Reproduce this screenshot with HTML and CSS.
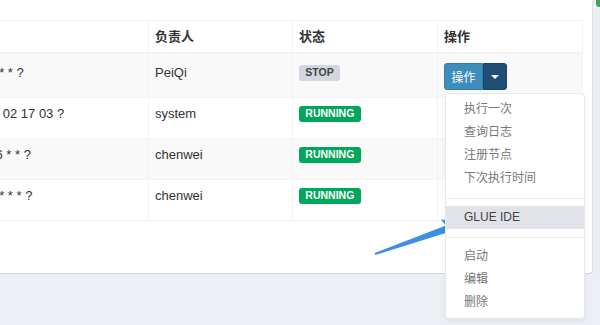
FILE: index.html
```html
<!DOCTYPE html>
<html lang="en">
<head>
    <meta charset="UTF-8">
    <title>任务管理</title>
    <link rel="stylesheet" href="styles.css">
</head>
<body>
    <span class="edge-dot"></span>
    <div class="box">
        <table class="job-table">
            <colgroup>
                <col class="c-cron">
                <col class="c-owner">
                <col class="c-status">
                <col class="c-op">
            </colgroup>
            <thead>
                <tr>
                    <th>Cron</th>
                    <th>负责人</th>
                    <th>状态</th>
                    <th>操作</th>
                </tr>
            </thead>
            <tbody>
                <tr class="odd with-btn">
                    <td>0 0 0&nbsp; * * ?</td>
                    <td>PeiQi</td>
                    <td><span class="label label-stop">STOP</span></td>
                    <td>
                        <div class="btn-group">
                            <button class="btn btn-main">操作</button>
                            <button class="btn btn-caret"><span class="caret"></span></button>
                            <ul class="dropdown-menu">
                                <li><a href="javascript:void(0)">执行一次</a></li>
                                <li><a href="javascript:void(0)">查询日志</a></li>
                                <li><a href="javascript:void(0)">注册节点</a></li>
                                <li><a href="javascript:void(0)">下次执行时间</a></li>
                                <li class="divider"></li>
                                <li class="active"><a href="javascript:void(0)">GLUE IDE</a></li>
                                <li class="divider"></li>
                                <li><a href="javascript:void(0)">启动</a></li>
                                <li><a href="javascript:void(0)">编辑</a></li>
                                <li><a href="javascript:void(0)">删除</a></li>
                            </ul>
                        </div>
                    </td>
                </tr>
                <tr>
                    <td>0 0 1&nbsp;&nbsp; 02 17 03 ?</td>
                    <td>system</td>
                    <td><span class="label label-run">RUNNING</span></td>
                    <td></td>
                </tr>
                <tr class="odd">
                    <td>0 0 0/6 * * ?</td>
                    <td>chenwei</td>
                    <td><span class="label label-run">RUNNING</span></td>
                    <td></td>
                </tr>
                <tr>
                    <td>0 0 0&nbsp; * * * ?</td>
                    <td>chenwei</td>
                    <td><span class="label label-run">RUNNING</span></td>
                    <td></td>
                </tr>
            </tbody>
        </table>
    </div>
    <!-- 标注箭头 -->
    <svg class="pointer" width="105" height="50" viewBox="0 0 105 50">
        <path d="M4.7 43.1 L75.9 15.6 L70.7 9.5 L97 12 L77.9 30.3 L78.2 22.2 L5.3 44.9 Z" fill="#3b8fe4"/>
    </svg>
</body>
</html>
```

FILE: styles.css
```css
* {
    margin: 0;
    padding: 0;
    box-sizing: border-box;
}
ul,ol,li {
    list-style-type: none;
}
body {
    background: #ecf0f5;
    font-family: "Liberation Sans", "Noto Sans CJK SC", sans-serif;
    font-size: 13px;
    color: #333;
    position: relative;
    height: 325px;
    overflow: hidden;
}
.edge-dot {
    position: absolute;
    right: -3px;
    top: -3px;
    width: 7px;
    height: 10px;
    border-radius: 3px;
    background: #3aa757;
}
/*内容框*/
.box {
    margin-left: -54px;
    width: 646px;
    padding: 20px 10px 52px;
    background: #fff;
    border-radius: 0 0 3px 3px;
    box-shadow: 0 1px 1px rgba(0,0,0,.1), 1px 0 1px rgba(0,0,0,.06);
}
.job-table {
    width: 626px;
    table-layout: fixed;
    border-collapse: collapse;
}
.c-cron { width: 192px; }
.c-owner { width: 144px; }
.c-status { width: 145px; }
.c-op { width: 145px; }
.job-table th,
.job-table td {
    border: 1px solid #f4f4f4;
    text-align: left;
    vertical-align: top;
    line-height: 20px;
    white-space: nowrap;
}
.job-table th {
    padding: 6px 6px 5px;
    font-weight: bold;
    border-bottom-width: 2px;
}
.job-table td {
    padding: 6px 6px 14px;
}
.job-table tr.with-btn td {
    padding: 9px 6px 7px;
}
.job-table tr.odd td {
    background: #f9f9f9;
}
/*状态标签*/
.label {
    display: inline-block;
    padding: .2em .6em .3em;
    font-size: 10.5px;
    font-weight: bold;
    line-height: 1;
    border-radius: 3px;
    vertical-align: 1px;
}
.label-stop {
    background: #d2d6de;
    color: #444;
}
.label-run {
    background: #00a65a;
    color: #fff;
}
/*操作按钮*/
.btn-group {
    position: relative;
    display: inline-flex;
    vertical-align: top;
}
.btn {
    height: 27px;
    border: 1px solid #367fa9;
    color: #fff;
    font-family: "Liberation Sans", "Noto Sans CJK SC", sans-serif;
    font-size: 12px;
    cursor: pointer;
}
.btn-main {
    width: 39px;
    background: #3c8dbc;
    border-radius: 3px 0 0 3px;
}
.btn-caret {
    width: 24px;
    background: #204d74;
    border-color: #1a4366;
    border-radius: 0 3px 3px 0;
    display: flex;
    align-items: center;
    justify-content: center;
}
.caret {
    width: 0;
    height: 0;
    border-top: 4px solid #fff;
    border-left: 4px solid transparent;
    border-right: 4px solid transparent;
}
.dropdown-menu {
    position: absolute;
    top: 100%;
    left: 1px;
    margin-top: 3px;
    width: 140px;
    padding: 4px 0;
    background: #fff;
    border: 1px solid #e8e8e8;
    border-radius: 4px;
    box-shadow: 0 2px 5px rgba(0,0,0,.06);
    z-index: 10;
}
.dropdown-menu li a {
    display: block;
    padding: 3px 18px;
    line-height: 17px;
    font-size: 12px;
    color: #777;
    text-decoration: none;
}
.dropdown-menu li.active a {
    background: #e1e3e9;
    color: #444;
}
.dropdown-menu li.divider {
    height: 1px;
    margin: 8px 0 7px;
    background: #eee;
}
/*标注*/
.pointer {
    position: absolute;
    left: 370px;
    top: 210px;
}
```
